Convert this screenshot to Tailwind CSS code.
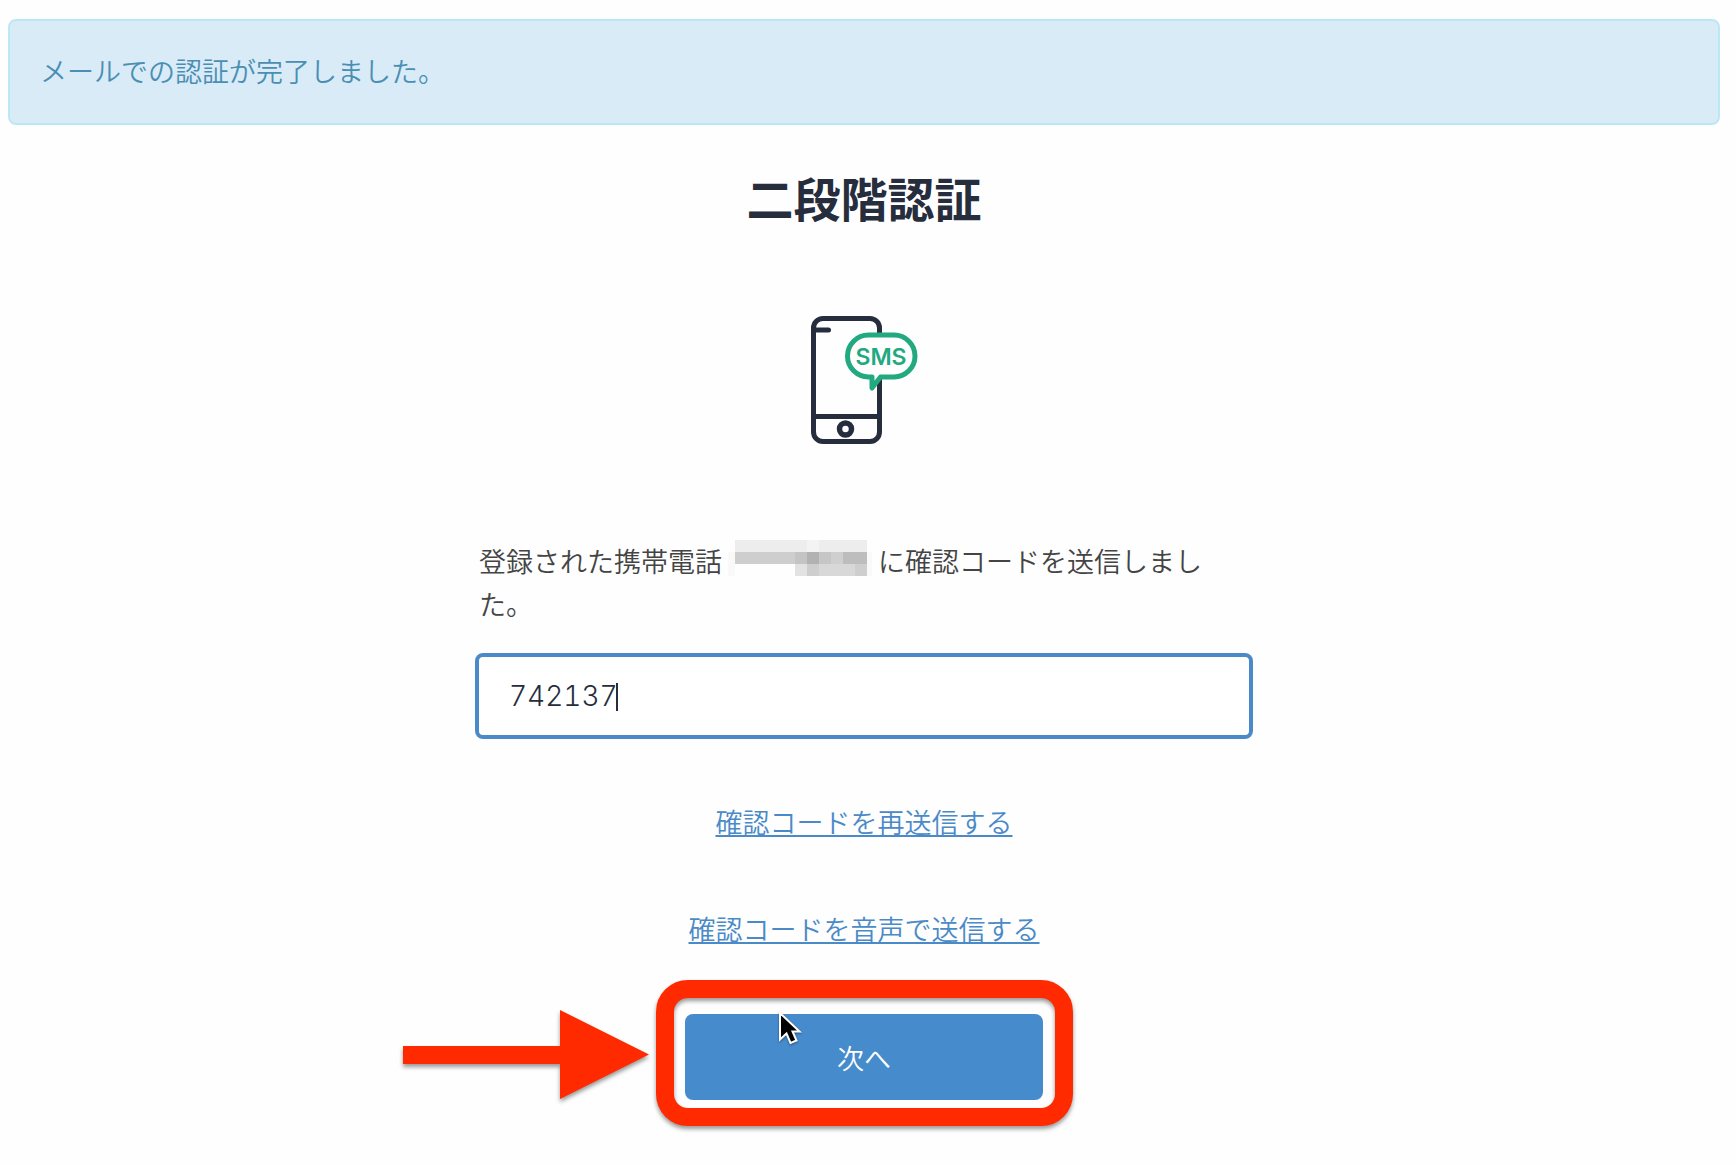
<!DOCTYPE html>
<html lang="ja">
<head>
  <meta charset="UTF-8" />
  <meta name="viewport" content="width=device-width, initial-scale=1.0" />
  <title>二段階認証</title>
  <script src="https://cdn.jsdelivr.net/npm/@tailwindcss/browser@4"></script>
</head>
<body class="min-h-screen overflow-x-hidden bg-[#fefefe] pt-[19px] pr-4 pb-16 pl-2 font-['Noto_Sans_CJK_JP',sans-serif] text-[27px] leading-[43px] font-[350] text-[#444]">
  <div role="status" class="rounded-lg border-2 border-[#bce8f1] bg-[#d9ebf7] px-[30px] pt-7 pb-[31px] text-[#4a8fb3]">
    メールでの認証が完了しました。
  </div>

  <main class="mx-auto flex max-w-[778px] flex-col items-center">
    <h1 class="mt-10 text-[47px] leading-[64px] font-bold text-[#262d3d]">二段階認証</h1>

    <svg class="mt-[87px] h-[129px] w-[108px]" viewBox="0 0 108 129" fill="none" stroke-linecap="round" stroke-linejoin="round" role="img" aria-label="SMS">
      <rect x="3.500" y="2.500" width="66" height="123" rx="9.500" stroke="#262d3d" stroke-width="5" />
      <path d="M4 14H18.500M4 100.500H69" stroke="#262d3d" stroke-width="5" />
      <circle cx="35.500" cy="113" r="6" stroke="#262d3d" stroke-width="5.500" />
      <path d="M58.500 19H84A21 21 0 0 1 84 61H70.500L62 72V61H58.500A21 21 0 0 1 58.500 19Z" fill="#fefefe" stroke="#22a980" stroke-width="5" />
      <text x="71" y="49" text-anchor="middle" font-family="Inter, sans-serif" font-size="23" font-weight="600" fill="#22a980">SMS</text>
    </svg>

    <form class="mt-[94px] flex w-full flex-col items-center">
      <label for="code" class="block w-full px-1">登録された携帯電話
        <svg class="inline-block h-9 w-36 align-[-4px]" viewBox="0 0 144 36" shape-rendering="crispEdges" aria-hidden="true">
          <path fill="#f9f9f9" d="M0 12h7v24H0zM139 12h5v24h-5z" />
          <path fill="#ededed" d="M7 0h132v12H7z" />
          <path fill="#f3f3f3" d="M79 0h12v12H79z" />
          <path fill="#cecece" d="M7 12h72v12H7z" />
          <path fill="#c4c4c4" d="M67 12h12v12H67z" />
          <path fill="#b2b2b2" d="M79 12h12v12H79z" />
          <path fill="#c6c6c6" d="M91 12h12v12H91z" />
          <path fill="#cfcfcf" d="M103 12h12v12h-12z" />
          <path fill="#bdbdbd" d="M115 12h24v12h-24z" />
          <path fill="#e2e2e2" d="M67 24h12v12H67z" />
          <path fill="#cecece" d="M79 24h12v12H79zM127 24h12v12h-12z" />
          <path fill="#d8d8d8" d="M91 24h36v12H91z" />
        </svg>
        に確認コードを送信しました。</label>

      <div class="relative mt-7 w-full text-[28px]">
        <input id="code" type="text" inputmode="numeric" value="742137" class="h-[86px] w-full rounded-lg border-4 border-[#4a8ac8] bg-white px-[30px] font-[Inter,sans-serif] leading-9 font-light text-[#262d3d] tabular-nums caret-transparent outline-none" />
        <!-- text cursor -->
        <span class="absolute top-[30px] left-[141px] h-7 w-0.5 bg-[#262d3d]"></span>
      </div>

      <a href="#" class="mt-[61px] text-[#4a8ac8] underline decoration-2 underline-offset-2">確認コードを再送信する</a>
      <a href="#" class="mt-16 text-[#4a8ac8] underline decoration-2 underline-offset-2">確認コードを音声で送信する</a>

      <div class="relative mt-16 w-[358px]">
        <button type="submit" class="h-[86px] w-full rounded-lg bg-[#468bcc] text-white">次へ</button>

        <!-- highlight frame and arrow -->
        <div class="pointer-events-none absolute -top-[34px] -right-[30px] -bottom-[26px] -left-[29px] rounded-[32px] border-[18px] border-[#ff2a00] drop-shadow-[0_3px_2px_rgba(0,0,0,0.4)]"></div>
        <svg class="pointer-events-none absolute -top-1 -left-[282px] h-[90px] w-[246px] overflow-visible drop-shadow-[0_3px_2px_rgba(0,0,0,0.4)]" viewBox="0 0 246 90" aria-hidden="true">
          <path fill="#ff2a00" d="M0 36H157V0L246 44.500L157 89V54H0Z" />
        </svg>
        <!-- mouse pointer -->
        <svg class="pointer-events-none absolute -top-1 left-[93px] h-9 w-6 overflow-visible drop-shadow-[0_1px_1px_rgba(0,0,0,0.4)]" viewBox="0 0 24 36" aria-hidden="true">
          <path fill="#000" stroke="#fff" stroke-width="2" d="M2 3V29.500L8.500 23.500L12.500 33L18.500 30.500L14.500 21.500H21.500Z" />
        </svg>
      </div>
    </form>
  </main>
</body>
</html>
